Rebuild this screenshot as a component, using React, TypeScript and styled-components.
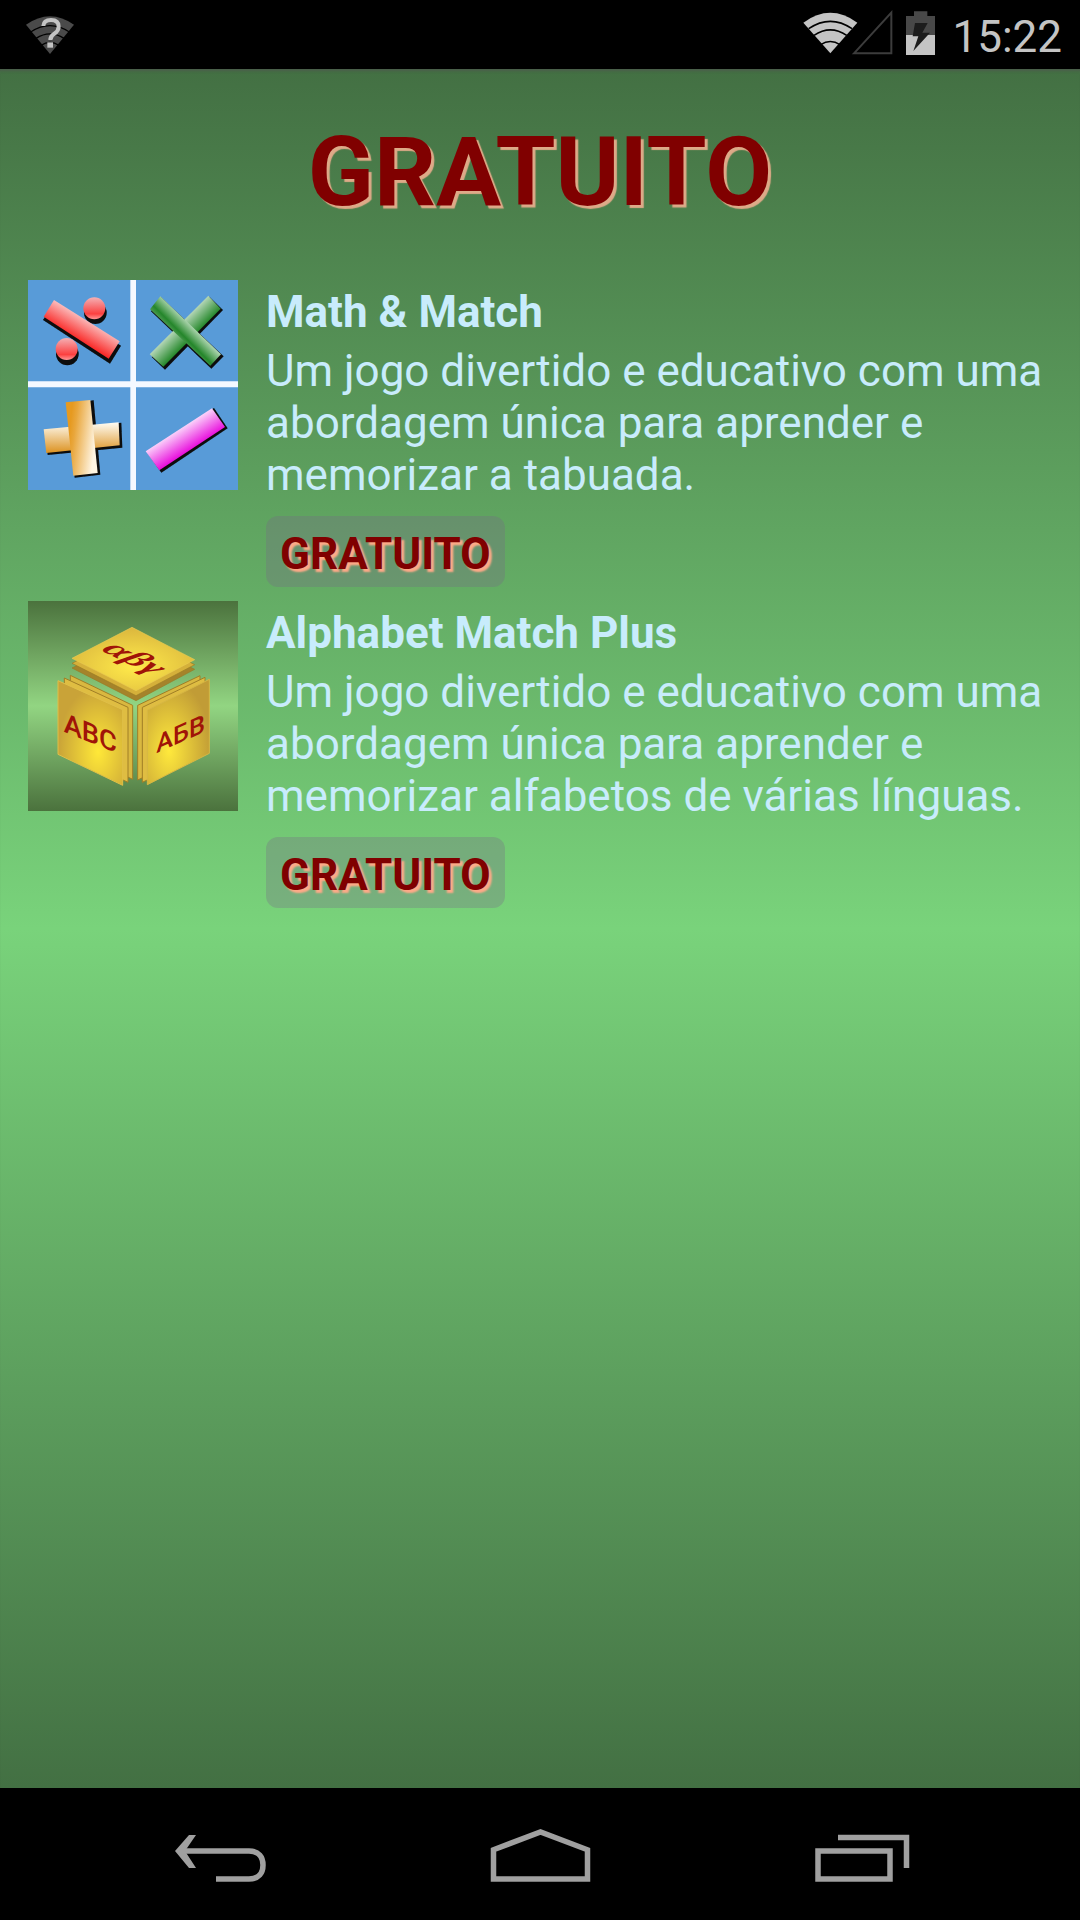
import React from "react";
import styled, { createGlobalStyle } from "styled-components";

const GlobalStyle = createGlobalStyle`
  *, *::before, *::after { box-sizing: border-box; }
  body {
    margin: 0;
    background: #000;
    font-family: Roboto, "Noto Sans", sans-serif;
  }
`;

const Screen = styled.div`
  display: flex;
  flex-direction: column;
  min-height: 100vh;
`;

const StatusBar = styled.header`
  display: flex;
  justify-content: space-between;
  height: 69px;
  padding: 10px 18px 0 25px;
  background: #000;
`;

const StatusGroup = styled.div`
  display: flex;
  align-items: flex-start;
`;

const StatusIcon = styled.svg<{ $width: number; $gap?: number }>`
  display: block;
  flex: none;
  width: ${(p) => p.$width}px;
  height: 45px;
  margin-left: ${(p) => p.$gap ?? 0}px;
`;

const Clock = styled.time`
  margin-left: 16px;
  color: #c4c4c4;
  font-size: 44px;
  line-height: 54px;
`;

const Content = styled.main`
  flex: 1;
  padding: 47px 28px 28px;
  background: linear-gradient(#437043, #79d37b 50%, #437043);
  box-shadow: inset 0 4px 3px -2px rgba(80, 80, 80, 0.6);
`;

const Heading = styled.h1`
  margin: 0 0 52px;
  color: #800000;
  font-size: 97px;
  font-weight: 700;
  line-height: 112px;
  text-align: center;
  text-shadow: 3px 3px 1px #deaa88;
`;

const AppList = styled.ul`
  display: flex;
  flex-direction: column;
  gap: 14px;
  margin: 0;
  padding: 0;
  list-style: none;
`;

const AppItem = styled.li`
  display: flex;
  align-items: flex-start;
  gap: 28px;
`;

const AppIcon = styled.svg`
  display: block;
  flex: none;
  width: 210px;
  height: 210px;
`;

const AppText = styled.div`
  flex: 1;
  min-width: 0;
  padding-top: 6px;
  color: #c8ecfc;
`;

const AppName = styled.h2`
  margin: 0 0 7px;
  font-size: 44px;
  font-weight: 700;
  line-height: 52px;
`;

const Description = styled.p`
  margin: 0 0 15px;
  font-size: 44px;
  line-height: 52px;
`;

const PriceButton = styled.button`
  display: block;
  height: 71px;
  padding: 4px 14px 0;
  border: 0;
  border-radius: 12px;
  background: rgba(120, 104, 136, 0.3);
  color: #800000;
  font-family: inherit;
  font-size: 44px;
  font-weight: 700;
  line-height: 52px;
  text-shadow: 3px 3px 2px #ffaa88;
  cursor: pointer;
`;

const NavBar = styled.nav`
  display: grid;
  grid-template-columns: repeat(3, 1fr);
  height: 132px;
  padding: 0 60px;
  background: #000;
`;

const NavButton = styled.button`
  display: flex;
  align-items: center;
  justify-content: center;
  padding: 0;
  border: 0;
  background: none;
  color: #a0a0a0;
  cursor: pointer;
`;

const NavIcon = styled.svg`
  display: block;
  width: 104px;
  height: 60px;
`;

const UnknownWifi = () => (
  <StatusIcon $width={50} viewBox="75 30 150 135" aria-hidden="true">
    <path d="M78 74Q150 23 222 74L150 162Z" fill="#4a4a4a" />
    <g fill="none" stroke="#000" strokeWidth="4">
      <path d="M92 96Q150 58 208 96" />
      <path d="M108 115Q150 88 192 115" />
      <path d="M123 136Q150 118 177 136" />
    </g>
    <path d="M130 78Q131 60 153 60Q176 60 176 80Q176 92 163 101Q151 109 151 120" fill="none" stroke="#c4c4c4" strokeWidth="12" />
    <rect x="142" y="127" width="17" height="16" fill="#c4c4c4" />
  </StatusIcon>
);

const Wifi = () => (
  <StatusIcon $width={55} viewBox="69 30 165 135" aria-hidden="true">
    <path d="M70 68Q151 9 232 68L151 160Z" fill="#c4c4c4" />
    <g fill="none" stroke="#000" strokeWidth="5">
      <path d="M86 86Q151 42 216 86" />
      <path d="M102 106Q151 73 200 106" />
      <path d="M122 134Q151 115 180 134" />
    </g>
  </StatusIcon>
);

const Signal = () => (
  <StatusIcon $width={42} $gap={-7} viewBox="213 30 126 135" aria-hidden="true">
    <path d="M222 160L334 38V160Z" fill="none" stroke="#3c3c3c" strokeWidth="6" />
  </StatusIcon>
);

const Battery = () => (
  <StatusIcon $width={31} $gap={12} viewBox="375 30 93 135" aria-hidden="true">
    <path d="M402 34H442V48H465V105H378V48H402Z" fill="#484848" />
    <path d="M378 105H465V165H378Z" fill="#c4c4c4" />
    <path d="M405 69H443L427 98H450L400 153L415 109H398Z" fill="#1c1c1c" />
  </StatusIcon>
);

const MathIcon = () => (
  <AppIcon viewBox="24 30 630 630" role="img" aria-label="Math &amp; Match">
    <defs>
      <linearGradient id="redBar" x1="205" y1="140" x2="165" y2="208" gradientUnits="userSpaceOnUse">
        <stop offset="0" stopColor="#fbd0d0" />
        <stop offset="1" stopColor="#fa2220" />
      </linearGradient>
      <linearGradient id="redBall" x1="0" y1="0" x2="0" y2="1">
        <stop offset="0" stopColor="#f5b0b4" />
        <stop offset="0.75" stopColor="#fb4040" />
        <stop offset="1" stopColor="#f99" />
      </linearGradient>
      <linearGradient id="greenBack" x1="477" y1="165" x2="520" y2="208" gradientUnits="userSpaceOnUse">
        <stop offset="0" stopColor="#b4d6b6" />
        <stop offset="1" stopColor="#16801c" />
      </linearGradient>
      <linearGradient id="greenFront" x1="518" y1="165" x2="478" y2="205" gradientUnits="userSpaceOnUse">
        <stop offset="0" stopColor="#b8dcba" />
        <stop offset="0.75" stopColor="#24862a" />
        <stop offset="1" stopColor="#4a984e" />
      </linearGradient>
      <linearGradient id="goldBar" x1="0" y1="0" x2="0" y2="1">
        <stop offset="0" stopColor="#fffdf5" />
        <stop offset="1" stopColor="#dc9220" />
      </linearGradient>
      <linearGradient id="goldPost" x1="145" y1="505" x2="226" y2="515" gradientUnits="userSpaceOnUse">
        <stop offset="0" stopColor="#e69a20" />
        <stop offset="0.2" stopColor="#e9a73d" />
        <stop offset="1" stopColor="#fff5e2" />
      </linearGradient>
      <linearGradient id="pinkBar" x1="478" y1="475" x2="518" y2="538" gradientUnits="userSpaceOnUse">
        <stop offset="0" stopColor="#fbd8fb" />
        <stop offset="1" stopColor="#e808dc" />
      </linearGradient>
      <filter id="soft" x="-20%" y="-20%" width="140%" height="140%">
        <feGaussianBlur stdDeviation="2" />
      </filter>
    </defs>
    <rect x="24" y="30" width="630" height="630" fill="#589bd8" />
    <path d="M331 30H348V334H654V352H348V660H331V352H24V334H331Z" fill="#f4f8ff" />
    <g fill="#0a0a0a" filter="url(#soft)">
      <path d="M102 99L303 227L270 281L69 150Z" />
      <circle cx="226" cy="128" r="34" />
      <circle cx="142" cy="252" r="34" />
      <path d="M568 80L609 120L435 299L395 261Z" />
      <path d="M423 82L611 259L574 296L393 124Z" />
      <path d="M77 482L304 458L307 533L83 555Z" />
      <path d="M144 402L221 391L241 614L164 623Z" />
      <path d="M582 414L623 475L424 608L383 550Z" />
    </g>
    <path d="M102 90L299 214L266 266L71 140Z" fill="url(#redBar)" />
    <circle cx="223" cy="115" r="33" fill="url(#redBall)" />
    <circle cx="140" cy="237" r="33" fill="url(#redBall)" />
    <path d="M565 77L602 116L430 290L389 253Z" fill="url(#greenBack)" />
    <path d="M421 79L603 253L571 287L390 118Z" fill="url(#greenFront)" />
    <path d="M71 478L296 457L299 526L79 549Z" fill="url(#goldBar)" />
    <path d="M137 397L211 390L233 609L160 617Z" fill="url(#goldPost)" />
    <path d="M576 415L615 471L418 601L377 544Z" fill="url(#pinkBar)" />
  </AppIcon>
);

const AlphabetIcon = () => (
  <AppIcon viewBox="24 33 630 630" role="img" aria-label="Alphabet Match Plus">
    <defs>
      <linearGradient id="tileBack" x1="0" y1="0" x2="0" y2="1">
        <stop offset="0" stopColor="#4b723d" />
        <stop offset="0.5" stopColor="#92d582" />
        <stop offset="1" stopColor="#4b723d" />
      </linearGradient>
      <radialGradient id="topFace" cx="0.5" cy="0.62" r="0.6">
        <stop offset="0" stopColor="#ffea4a" />
        <stop offset="1" stopColor="#dcb83e" />
      </radialGradient>
      <radialGradient id="leftFace" cx="0.62" cy="0.68" r="0.62">
        <stop offset="0" stopColor="#ffe838" />
        <stop offset="1" stopColor="#c9a338" />
      </radialGradient>
      <radialGradient id="rightFace" cx="0.35" cy="0.68" r="0.68">
        <stop offset="0" stopColor="#ffe93c" />
        <stop offset="1" stopColor="#c19c36" />
      </radialGradient>
    </defs>
    <rect x="24" y="33" width="630" height="630" fill="url(#tileBack)" />
    <g stroke="#9a7a22" strokeWidth="2" strokeLinejoin="round">
      <path d="M156 234L336 144L524 238L348 332Z" fill="#a5832a" />
      <path d="M156 220L336 128L524 224L348 317Z" fill="#d5b03a" />
      <path d="M156 205L336 112L524 209L348 302Z" fill="url(#topFace)" stroke="#e8ca50" />
    </g>
    <g stroke="#a07e26" strokeWidth="3" strokeLinejoin="round">
      <path d="M151 256L338 346V568L151 480Z" fill="#d9b840" />
      <path d="M133 264L324 352V577L133 488Z" fill="#dfbd42" />
      <path d="M114 272L308 359V586L114 493Z" fill="url(#leftFace)" stroke="#dfbf48" />
    </g>
    <g stroke="#a07e26" strokeWidth="3" strokeLinejoin="round">
      <path d="M540 257L353 346V570L540 482Z" fill="#d9b840" />
      <path d="M555 262L367 352V577L555 488Z" fill="#dfbd42" />
      <path d="M568 268L382 361V584L568 490Z" fill="url(#rightFace)" stroke="#d7b744" />
    </g>
    <g fill="#a01408" fontFamily="Roboto, 'Noto Sans', sans-serif" fontWeight="500">
      <text transform="translate(131 425) skewY(22)" fontSize="82">ABC</text>
      <text transform="translate(409 490) skewY(-24)" fontSize="76">АБВ</text>
      <text transform="matrix(0.9 0.44 -0.7 0.38 240 180)" fontSize="118" fontWeight="700" fontStyle="italic" fontFamily="'Liberation Serif', serif">αβγ</text>
    </g>
  </AppIcon>
);

const BackIcon = () => (
  <NavIcon viewBox="168 1824 104 60" aria-hidden="true">
    <path d="M181 1851H249C259 1851 263 1857 263 1865S259 1879 249 1879H216" fill="none" stroke="currentColor" strokeWidth="5.5" />
    <path d="M175 1851L189 1835H196L185 1851L196 1868H189Z" fill="currentColor" />
  </NavIcon>
);

const HomeIcon = () => (
  <NavIcon viewBox="488 1824 104 60" aria-hidden="true">
    <path d="M493.5 1849.8L540.5 1832L587.5 1849.8V1879H493.5Z" fill="none" stroke="currentColor" strokeWidth="5.5" />
  </NavIcon>
);

const RecentsIcon = () => (
  <NavIcon viewBox="808 1824 104 60" aria-hidden="true">
    <path d="M818 1851H890V1879H818ZM838 1837.5H906.5V1868" fill="none" stroke="currentColor" strokeWidth="5.5" />
  </NavIcon>
);

const apps = [
  {
    name: "Math & Match",
    description: "Um jogo divertido e educativo com uma abordagem única para aprender e memorizar a tabuada.",
    price: "GRATUITO",
    Icon: MathIcon,
  },
  {
    name: "Alphabet Match Plus",
    description: "Um jogo divertido e educativo com uma abordagem única para aprender e memorizar alfabetos de várias línguas.",
    price: "GRATUITO",
    Icon: AlphabetIcon,
  },
];

export default function App() {
  return (
    <Screen>
      <GlobalStyle />
      <StatusBar>
        <StatusGroup>
          <UnknownWifi />
        </StatusGroup>
        <StatusGroup>
          <Wifi />
          <Signal />
          <Battery />
          <Clock>15:22</Clock>
        </StatusGroup>
      </StatusBar>
      <Content>
        <Heading>GRATUITO</Heading>
        <AppList>
          {apps.map(({ name, description, price, Icon }) => (
            <AppItem key={name}>
              <Icon />
              <AppText>
                <AppName>{name}</AppName>
                <Description>{description}</Description>
                <PriceButton type="button">{price}</PriceButton>
              </AppText>
            </AppItem>
          ))}
        </AppList>
      </Content>
      <NavBar>
        <NavButton type="button" aria-label="Voltar">
          <BackIcon />
        </NavButton>
        <NavButton type="button" aria-label="Início">
          <HomeIcon />
        </NavButton>
        <NavButton type="button" aria-label="Recentes">
          <RecentsIcon />
        </NavButton>
      </NavBar>
    </Screen>
  );
}
